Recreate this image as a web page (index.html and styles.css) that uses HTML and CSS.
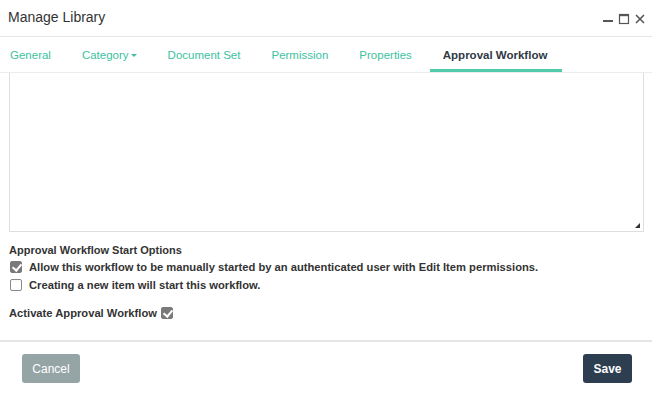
FILE: index.html
```html
<!DOCTYPE html>
<html>
<head>
<meta charset="utf-8">
<link rel="stylesheet" href="styles.css">
</head>
<body>
<div class="dialog">
  <div class="header">
    <div class="title">Manage Library</div>
    <div class="controls">
      <svg class="ctl" width="12" height="12" viewBox="0 0 12 12"><rect x="1" y="7" width="10" height="2" fill="#555"/></svg>
      <svg class="ctl" width="12" height="12" viewBox="0 0 12 12"><rect x="1.5" y="1.5" width="9" height="9" fill="none" stroke="#555" stroke-width="1.2"/><rect x="1" y="1" width="10" height="2.2" fill="#555"/></svg>
      <svg class="ctl" width="12" height="12" viewBox="0 0 12 12"><path d="M2 2 L10 10 M10 2 L2 10" stroke="#555" stroke-width="1.6" fill="none"/></svg>
    </div>
  </div>
  <div class="tabs">
    <div class="tab first">General</div>
    <div class="tab">Category<span class="caret"></span></div>
    <div class="tab">Document Set</div>
    <div class="tab">Permission</div>
    <div class="tab">Properties</div>
    <div class="tab active">Approval Workflow</div>
  </div>
  <div class="content">
    <div class="textarea"><span class="grip"></span></div>
    <div class="section-title">Approval Workflow Start Options</div>
    <div class="row"><span class="cb checked"></span><span>Allow this workflow to be manually started by an authenticated user with Edit Item permissions.</span></div>
    <div class="row"><span class="cb"></span><span>Creating a new item will start this workflow.</span></div>
    <div class="activate"><span>Activate Approval Workflow</span><span class="cb checked"></span></div>
  </div>
  <div class="footer">
    <button class="btn cancel">Cancel</button>
    <button class="btn save">Save</button>
  </div>
</div>
</body>
</html>
```
FILE: styles.css
```css
html, body { margin: 0; padding: 0; background: #fff; }
* { box-sizing: border-box; }
body { font-family: "Liberation Sans", Arial, sans-serif; color: #333; }
.dialog { width: 652px; height: 394px; display: flex; flex-direction: column; overflow: hidden; }
.header { height: 37px; flex: none; border-bottom: 1px solid #e6e6e6; display: flex; align-items: center; justify-content: space-between; padding: 0 6px 0 8px; }
.title { font-size: 14px; color: #333; margin-top: -2px; }
.controls { display: flex; gap: 4px; align-items: center; margin-top: 1px; }
.ctl { display: block; }
.tabs { height: 36px; flex: none; border-bottom: 1px solid #ececec; display: flex; gap: 5px; }
.tab { font-size: 11.5px; color: #3cc29e; padding: 3px 13px 0; display: flex; align-items: center; border-bottom: 3px solid transparent; }
.tab.first { padding-left: 10px; }
.tab.active { color: #2f3a46; font-weight: bold; border-bottom-color: #4fcbab; padding-right: 15px; }
.caret { display: inline-block; width: 0; height: 0; border-left: 3px solid transparent; border-right: 3px solid transparent; border-top: 3px solid #3cc29e; margin-left: 2px; margin-top: 1px; }
.content { flex: 1; padding: 0 8px 0 9px; }
.textarea { height: 159px; border: 1px solid #dedede; border-top: none; position: relative; }
.grip { position: absolute; right: 3px; bottom: 3px; width: 0; height: 0; border-left: 5px solid transparent; border-bottom: 5px solid #333; }
.section-title { font-size: 11px; font-weight: bold; margin-top: 10px; height: 16px; line-height: 16px; }
.row { display: flex; align-items: center; gap: 7px; font-size: 11.2px; font-weight: bold; height: 18px; padding-left: 1px; }
.cb { width: 12px; height: 12px; border: 1px solid #888; border-radius: 2px; background: #fff; flex: none; position: relative; }
.cb.checked { background: #7a7a7a; border-color: #7a7a7a; }
.cb.checked::after { content: ""; position: absolute; left: 3px; top: 0px; width: 4px; height: 7px; border: solid #fff; border-width: 0 2px 2px 0; transform: rotate(40deg); }
.activate { display: flex; align-items: center; gap: 4px; font-size: 11.2px; font-weight: bold; margin-top: 10px; height: 18px; }
.footer { height: 54px; flex: none; border-top: 2px solid #e6e6e6; display: flex; justify-content: space-between; align-items: flex-start; padding: 12px 20px 0 22px; }
.btn { height: 29px; border: none; border-radius: 3px; color: #fff; font-family: "Liberation Sans", Arial, sans-serif; font-size: 12px; padding: 0; }
.cancel { width: 58px; background: #95a5a6; }
.save { width: 49px; background: #2c3e50; font-weight: bold; }
```
